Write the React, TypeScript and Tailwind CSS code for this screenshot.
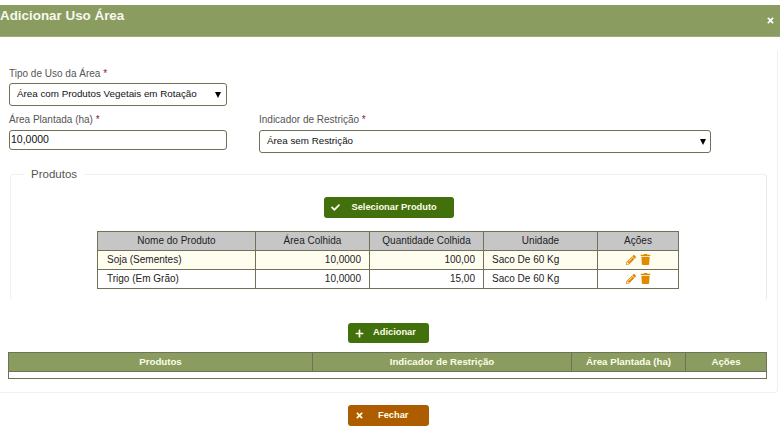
import React from 'react';
import { FaCheck, FaPencilAlt, FaPlus, FaTimes, FaTrash } from 'react-icons/fa';

const PRODUCTS = [
  { name: 'Soja (Sementes)', area: '10,0000', qty: '100,00', unit: 'Saco De 60 Kg', tint: 'bg-[#fffdf0]' },
  { name: 'Trigo (Em Grão)', area: '10,0000', qty: '15,00', unit: 'Saco De 60 Kg', tint: 'bg-white' },
];

const Label = ({ text }: { text: string }): React.JSX.Element => (
  <label className="block text-[10px] leading-[14px] text-[#555]">
    {text} <span className="text-[#8a1c3c]">*</span>
  </label>
);

const Caret = (): React.JSX.Element => (
  <span className="h-0 w-0 border-x-[3.5px] border-t-[6px] border-x-transparent border-t-black" />
);

const Field = ({ text, className }: { text: string; className: string }): React.JSX.Element => (
  <div
    className={
      'flex items-center justify-between rounded-[3px] border border-[#6f7256] bg-white text-[9.8px] text-[#111] ' +
      className
    }
  >
    <span>{text}</span>
    <Caret />
  </div>
);

const ActionButton = ({
  icon,
  label,
  className,
}: {
  icon: React.ReactNode;
  label: string;
  className: string;
}): React.JSX.Element => (
  <button
    type="button"
    className={
      'flex items-center justify-start rounded-[3px] pl-[7px] text-[9.3px] font-bold text-[#fdfde8] ' + className
    }
  >
    {icon}
    {label}
  </button>
);

export default function App(): React.JSX.Element {
  return (
    <div className="h-[434px] w-[780px] overflow-hidden bg-white font-['Liberation_Sans',Arial,sans-serif]">
      <header className="mt-[5px] flex h-[32px] items-start justify-between border-b border-[#a5a87c] bg-[#8a9c60] text-white">
        <h1 className="mt-[1px] text-[13.4px] font-bold leading-[20px] text-[#f7f8ef]">Adicionar Uso Área</h1>
        <FaTimes size={9} className="mr-[5px] mt-[11px]" />
      </header>

      <div className="mt-[12px] h-[344px] w-[778px] rounded-r-[4px] border-r border-b border-[#f0f0f0]">
        <div className="pl-[9px] pt-[18px]">
          <Label text="Tipo de Uso da Área" />
          <Field text="Área com Produtos Vegetais em Rotação" className="mt-[2px] h-[23px] w-[218px] pl-[7px] pr-[5px]" />
          <div className="mt-[7px] flex items-start gap-[32px]">
            <div className="w-[218px]">
              <Label text="Área Plantada (ha)" />
              <div className="mt-[3px] flex h-[20px] items-center rounded-[3px] border border-[#6f7256] pl-[1px] text-[10.5px] text-[#111]">
                10,0000
              </div>
            </div>
            <div className="w-[452px]">
              <Label text="Indicador de Restrição" />
              <Field text="Área sem Restrição" className="mt-[3px] h-[23px] w-[452px] pl-[7px] pr-[4px]" />
            </div>
          </div>
        </div>

        <fieldset className="mt-[14px] ml-[10px] h-[133px] w-[757px] rounded-[3px] border-x border-t border-[#f2f2f2] border-r-[#e8e8e8]">
          <legend className="ml-[13px] bg-white px-[7px] text-[11.5px] leading-[14px] text-[#555]">Produtos</legend>
          <div className="mt-[16px] flex justify-center">
            <ActionButton
              icon={<FaCheck size={9} className="mr-[12px]" />}
              label="Selecionar Produto"
              className="h-[21px] w-[130px] bg-[#41700d]"
            />
          </div>
          <table className="ml-[86px] mt-[13px] w-[582px] table-fixed border-collapse border border-[#6f7256] text-[10px] text-[#222]">
            <thead>
              <tr className="h-[19px] bg-[#c6c6c6] text-center">
                <th className="w-[158px] border border-[#6f7256] pb-[2px] font-normal">Nome do Produto</th>
                <th className="w-[114px] border border-[#6f7256] pb-[2px] font-normal">Área Colhida</th>
                <th className="w-[114px] border border-[#6f7256] pb-[2px] font-normal">Quantidade Colhida</th>
                <th className="w-[114px] border border-[#6f7256] pb-[2px] font-normal">Unidade</th>
                <th className="border border-[#6f7256] pb-[2px] font-normal">Ações</th>
              </tr>
            </thead>
            <tbody>
              {PRODUCTS.map((p) => (
                <tr key={p.name} className={'h-[19px] ' + p.tint}>
                  <td className="border border-[#6f7256] pb-[2px] pl-[9px]">{p.name}</td>
                  <td className="border border-[#6f7256] pb-[2px] pr-[8px] text-right">{p.area}</td>
                  <td className="border border-[#6f7256] pb-[2px] pr-[8px] text-right">{p.qty}</td>
                  <td className="border border-[#6f7256] pb-[2px] pl-[8px]">{p.unit}</td>
                  <td className="border border-[#6f7256] pb-[1px]">
                    <div className="flex items-center justify-center gap-[4px] text-[#e08a00]">
                      <FaPencilAlt size={10} />
                      <FaTrash size={11} />
                    </div>
                  </td>
                </tr>
              ))}
            </tbody>
          </table>
        </fieldset>

        <div className="mt-[23px] flex justify-center">
          <ActionButton
            icon={<FaPlus size={9} className="mr-[9px]" />}
            label="Adicionar"
            className="h-[20px] w-[81px] bg-[#41700d]"
          />
        </div>

        <table className="ml-[8px] mt-[9px] w-[759px] table-fixed border-collapse border border-[#6f7256] text-[9.7px] text-[#fdfde8]">
          <thead>
            <tr className="h-[19px] bg-[#8a9c60]">
              <th className="w-[304px] border border-[#6f7256]">Produtos</th>
              <th className="w-[259px] border border-[#6f7256]">Indicador de Restrição</th>
              <th className="w-[114px] border border-[#6f7256]">Área Plantada (ha)</th>
              <th className="border border-[#6f7256]">Ações</th>
            </tr>
          </thead>
          <tbody>
            <tr className="h-[7px]">
              <td colSpan={4} />
            </tr>
          </tbody>
        </table>
      </div>

      <div className="mt-[12px] flex justify-center pr-[3px]">
        <ActionButton
          icon={<FaTimes size={9} className="mr-[14px]" />}
          label="Fechar"
          className="h-[21px] w-[81px] bg-[#ad5d00]"
        />
      </div>
    </div>
  );
}
